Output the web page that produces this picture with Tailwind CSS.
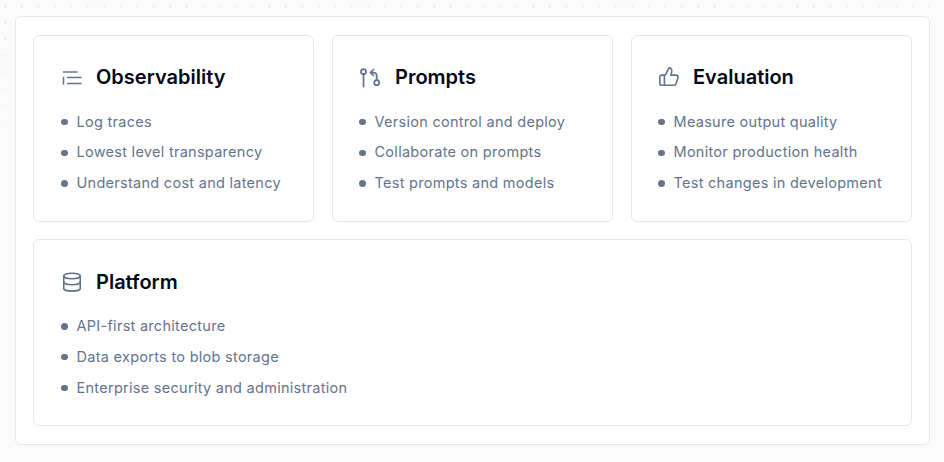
<!DOCTYPE html>
<html><head><meta charset="utf-8">
<script src="https://cdn.jsdelivr.net/npm/@tailwindcss/browser@4"></script>
</head>
<body class="relative m-0 h-[462px] w-[944px] overflow-hidden bg-[#fbfbfc] font-['Inter',sans-serif]">
<div class="absolute inset-x-0 top-0 h-[170px] bg-[radial-gradient(#e9ecf0_1px,transparent_1px)] bg-[length:16.5px_16.5px] bg-[position:-3px_-2px] [mask-image:linear-gradient(to_bottom,black_30%,transparent)]"></div>
<div class="relative ml-[15px] mt-[16px] h-[429px] w-[915px] rounded-md border border-[#e2e8f0] bg-white px-[17px] pt-[18px]">
  <div class="grid grid-cols-3 gap-x-[18px] gap-y-[17px]">
    <section class="h-[187px] rounded-md border border-[#e2e8f0] bg-white pl-[26px] pt-[29px]">
      <div class="flex h-[24px] items-center gap-[12px]">
        <svg class="size-6 text-[#64748b]" viewBox="0 0 24 24" fill="none" stroke="currentColor" stroke-width="1.5" stroke-linecap="round" stroke-linejoin="round"><path d="M3.5 7H17M7.5 12.5H21M7.5 18.5H21M3.5 12.5V19"/></svg>
        <h3 class="text-[20px] font-semibold leading-6 tracking-normal text-[#020817]">Observability</h3>
      </div>
      <ul class="mt-[18px] text-[14.5px] leading-[20px] tracking-[0.28px] text-[#64748b]">
        <li class="flex h-[30.25px] items-center gap-[9px] pl-px"><span class="size-[6.5px] rounded-full bg-[#64748b]"></span>Log traces</li>
        <li class="flex h-[30.25px] items-center gap-[9px] pl-px"><span class="mt-px size-[6.5px] rounded-full bg-[#64748b]"></span>Lowest level transparency</li>
        <li class="flex h-[30.25px] items-center gap-[9px] pl-px"><span class="mt-[2px] size-[6.5px] rounded-full bg-[#64748b]"></span>Understand cost and latency</li>
      </ul>
    </section>
    <section class="h-[187px] rounded-md border border-[#e2e8f0] bg-white pl-[25px] pt-[29px]">
      <div class="flex h-[24px] items-center gap-[12px] pl-px">
        <svg class="size-6 text-[#64748b]" viewBox="0 0 24 24" fill="none" stroke="currentColor" stroke-width="1.75" stroke-linecap="round" stroke-linejoin="round"><circle cx="4.5" cy="6.7" r="2.5"/><path d="M4.5 9.2V21.5"/><circle cx="17.7" cy="17.7" r="2.5"/><path d="M11.5 7.5h3.2a3 3 0 0 1 3 3v4.7"/><path d="m14.5 10.5-3-3 3-3"/></svg>
        <h3 class="text-[20px] font-semibold leading-6 tracking-normal text-[#020817]">Prompts</h3>
      </div>
      <ul class="mt-[18px] text-[14.5px] leading-[20px] tracking-[0.28px] text-[#64748b]">
        <li class="flex h-[30.25px] items-center gap-[9px] pl-px"><span class="size-[6.5px] rounded-full bg-[#64748b]"></span>Version control and deploy</li>
        <li class="flex h-[30.25px] items-center gap-[9px] pl-px"><span class="mt-px size-[6.5px] rounded-full bg-[#64748b]"></span>Collaborate on prompts</li>
        <li class="flex h-[30.25px] items-center gap-[9px] pl-px"><span class="mt-[2px] size-[6.5px] rounded-full bg-[#64748b]"></span>Test prompts and models</li>
      </ul>
    </section>
    <section class="h-[187px] rounded-md border border-[#e2e8f0] bg-white pl-[25px] pt-[29px]">
      <div class="flex h-[24px] items-center gap-[13px] pl-px">
        <svg class="size-[22px] text-[#64748b]" viewBox="0 0 24 24" fill="none" stroke="currentColor" stroke-width="1.75" stroke-linecap="round" stroke-linejoin="round"><path d="M7 10v11"/><path d="M15 5.9 14 10h6a2 2 0 0 1 1.9 2.6l-2.3 7A2 2 0 0 1 17.7 21H4a2 2 0 0 1-2-2v-7a2 2 0 0 1 2-2h2.8a2 2 0 0 0 1.8-1.1L12 2a3.1 3.1 0 0 1 3 3.9Z"/></svg>
        <h3 class="text-[20px] font-semibold leading-6 tracking-normal text-[#020817]">Evaluation</h3>
      </div>
      <ul class="mt-[18px] text-[14.5px] leading-[20px] tracking-[0.28px] text-[#64748b]">
        <li class="flex h-[30.25px] items-center gap-[9px] pl-px"><span class="size-[6.5px] rounded-full bg-[#64748b]"></span>Measure output quality</li>
        <li class="flex h-[30.25px] items-center gap-[9px] pl-px"><span class="mt-px size-[6.5px] rounded-full bg-[#64748b]"></span>Monitor production health</li>
        <li class="flex h-[30.25px] items-center gap-[9px] pl-px"><span class="mt-[2px] size-[6.5px] rounded-full bg-[#64748b]"></span>Test changes in development</li>
      </ul>
    </section>
    <section class="col-span-3 h-[187px] rounded-md border border-[#e2e8f0] bg-white pl-[26px] pt-[30px]">
      <div class="flex h-[24px] items-center gap-[13px] pl-px">
        <svg class="size-[22px] text-[#64748b]" viewBox="0 0 24 24" fill="none" stroke="currentColor" stroke-width="1.75" stroke-linecap="round" stroke-linejoin="round"><ellipse cx="12" cy="5.5" rx="9" ry="3"/><path d="M3 5.5V19a9 3 0 0 0 18 0V5.5"/><path d="M3 12a9 3 0 0 0 18 0"/></svg>
        <h3 class="text-[20px] font-semibold leading-6 tracking-normal text-[#020817]">Platform</h3>
      </div>
      <ul class="mt-[17px] text-[14.5px] leading-[20px] tracking-[0.28px] text-[#64748b]">
        <li class="flex h-[30.8px] items-center gap-[9px] pl-px"><span class="size-[6.5px] rounded-full bg-[#64748b]"></span>API-first architecture</li>
        <li class="flex h-[30.8px] items-center gap-[9px] pl-px"><span class="size-[6.5px] rounded-full bg-[#64748b]"></span>Data exports to blob storage</li>
        <li class="flex h-[30.8px] items-center gap-[9px] pl-px"><span class="size-[6.5px] rounded-full bg-[#64748b]"></span>Enterprise security and administration</li>
      </ul>
    </section>
  </div>
</div>
</body></html>
